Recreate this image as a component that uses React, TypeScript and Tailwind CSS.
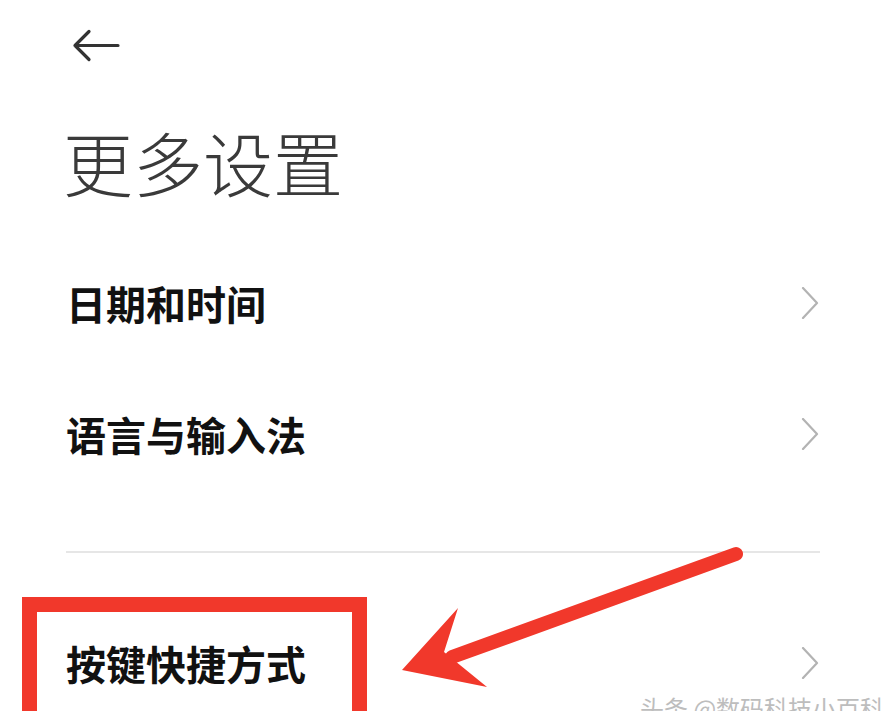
import React from 'react';

const items = ['日期和时间', '语言与输入法'];

function Chevron() {
  return (
    <svg width="19" height="32" viewBox="0 0 19 32" fill="none">
      <polyline points="2,1 16,16 2,31" stroke="#b3b3b3" strokeWidth="2.2" strokeLinecap="round" strokeLinejoin="round" />
    </svg>
  );
}

function Row({ label }: { label: string }) {
  return (
    <div className="flex h-[131px] items-center justify-between pl-[66px] pr-[66px]">
      <span className="text-[40px] leading-none font-bold text-[#111]">{label}</span>
      <Chevron />
    </div>
  );
}

export default function App() {
  return (
    <main
      className="relative h-[711px] w-[886px] overflow-hidden bg-white"
      style={{ fontFamily: '"Noto Sans CJK SC", "Noto Sans", sans-serif' }}
    >
      {/* Header */}
      <div className="pl-[72px] pt-[29px]">
        <svg width="48" height="33" viewBox="0 0 48 33" fill="none">
          <path d="M46 16.5 H3 M17 2.5 L3 16.5 L17 30.5" stroke="#333" strokeWidth="3.2" strokeLinecap="round" strokeLinejoin="round" />
        </svg>
      </div>
      <h1 className="mt-[60px] pl-[63px] text-[70px] leading-[80px] font-light text-[#3a3a3a]">更多设置</h1>

      {/* List */}
      <div className="mt-[35px]">
        {items.map((label) => (
          <Row key={label} label={label} />
        ))}
        <div className="mx-[66px] mt-[52px] h-[2px] bg-[#e6e6e6]" />
        <div className="mt-[44px]">
          <Row label="按键快捷方式" />
        </div>
      </div>

      {/* Annotation box */}
      <div className="absolute left-[22px] top-[597px] h-[200px] w-[345px] border-[15px] border-[#f1382b]" />

      {/* Annotation arrow */}
      <svg className="pointer-events-none absolute inset-0" width="886" height="711" viewBox="0 0 886 711">
        <line x1="736" y1="554" x2="452" y2="657" stroke="#f1382b" strokeWidth="14" strokeLinecap="round" />
        <polygon points="402,670 458,608 444,652 487,687" fill="#f1382b" />
      </svg>

      {/* Watermark */}
      <div className="absolute left-[640px] top-[696px] text-[24px] leading-none text-[#bdbdbd] whitespace-nowrap">
        头条 @数码科技小百科
      </div>
    </main>
  );
}
